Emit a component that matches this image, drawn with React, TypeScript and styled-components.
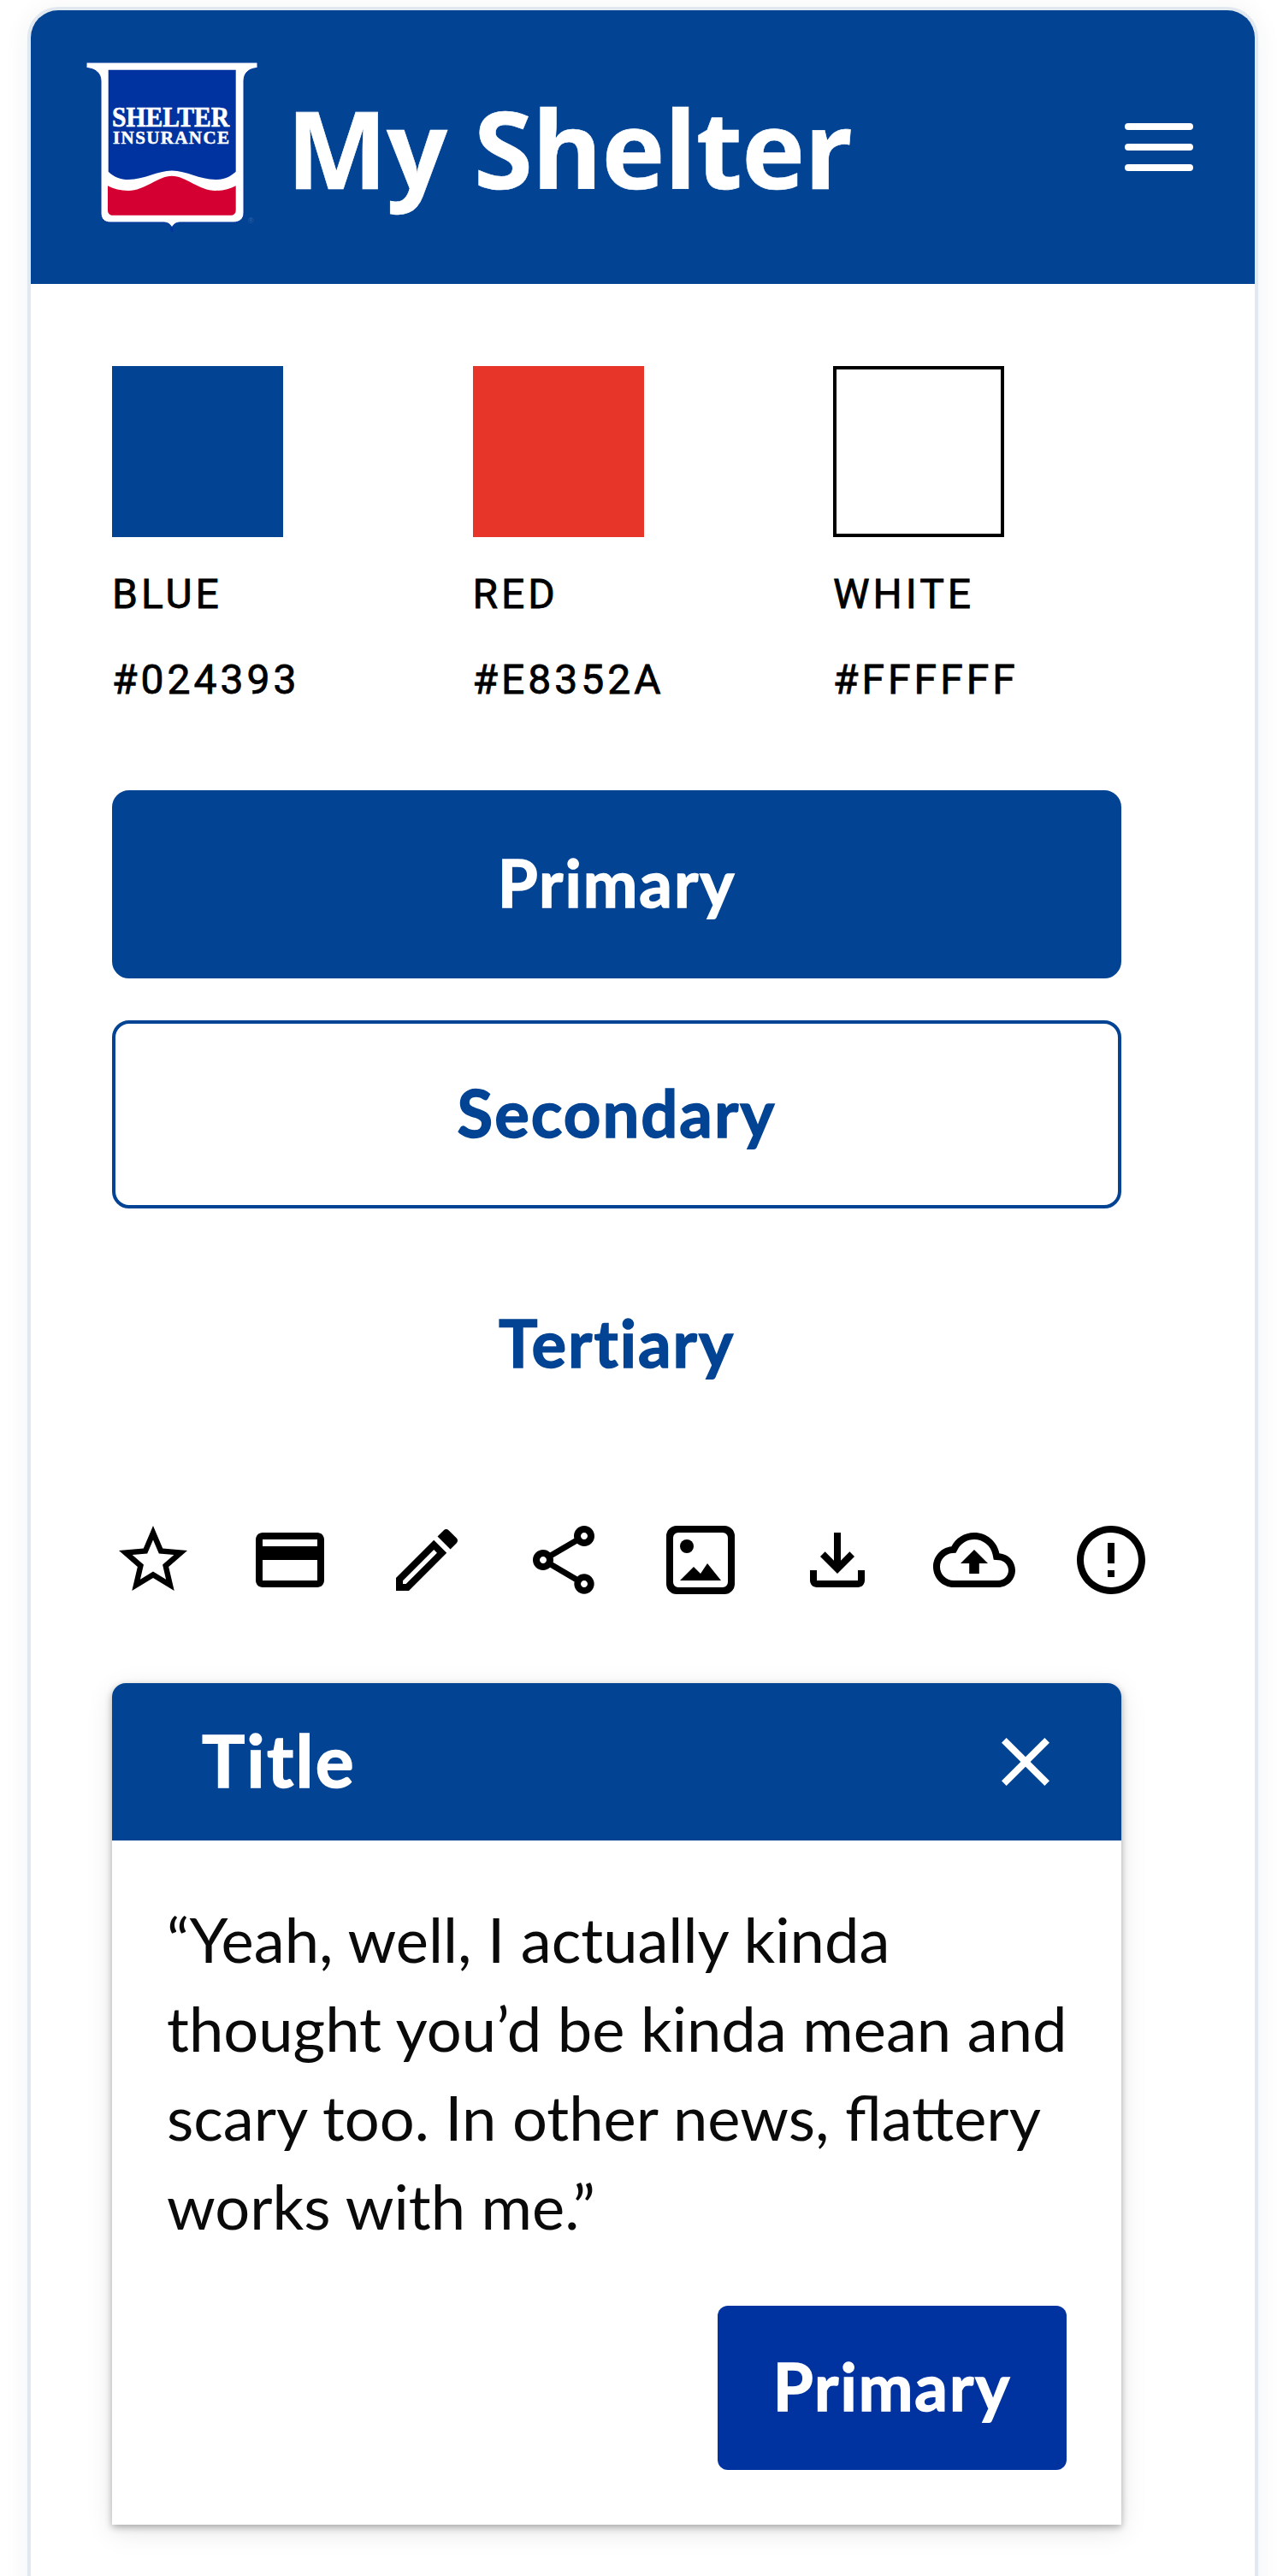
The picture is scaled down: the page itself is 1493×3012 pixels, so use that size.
import React from "react";
import styled, { createGlobalStyle } from "styled-components";

const Global = createGlobalStyle`
  html, body { margin: 0; padding: 0; background: #fff; }
  body { height: 3012px; overflow: hidden; font-family: "Lato", "Liberation Sans", sans-serif; }
`;

const Page = styled.div`
  height: 3012px;
  overflow: hidden;
  padding: 8px 22px 0 32px;
  box-sizing: border-box;
`;
const Frame = styled.div`
  width: 1439px;
  height: 3100px;
  box-sizing: border-box;
  background: #fff;
  border: 4px solid #e2e8f0;
  border-radius: 36px;
  box-shadow: 0 4px 32px rgba(30, 50, 90, 0.06);
  overflow: hidden;
`;
const Header = styled.header`
  height: 320px;
  background: #024393;
  display: flex;
  align-items: center;
  padding: 0 72px 0 65px;
`;
const Logo = styled.svg`
  width: 200px;
  height: 198px;
  flex: none;
`;
const Brand = styled.h1`
  margin: 0 0 0 34px;
  flex: 1;
  font: 700 125px/1 "Open Sans", "Liberation Sans", sans-serif;
  letter-spacing: -0.8px;
  color: #fff;
  -webkit-text-stroke: 0.6px #fff;
`;
const Burger = styled.div`
  display: flex;
  flex-direction: column;
  gap: 16px;
`;
const BurgerBar = styled.span`
  display: block;
  width: 80px;
  height: 8px;
  border-radius: 4px;
  background: #fff;
`;
const Content = styled.main`
  padding: 96px 0 0 95px;
`;
const Swatches = styled.section`
  display: grid;
  grid-template-columns: repeat(3, 421.5px);
`;
const Swatch = styled.div``;
const Chip = styled.div<{ $color: string; $outlined?: boolean }>`
  width: 200px;
  height: 200px;
  box-sizing: border-box;
  background: ${(p) => p.$color};
  border: ${(p) => (p.$outlined ? "4px solid #000" : "none")};
  margin-bottom: 17px;
`;
const SwatchText = styled.div`
  font: 400 48px/100px Roboto, "Liberation Sans", sans-serif;
  letter-spacing: 4px;
  color: #000;
  -webkit-text-stroke: 0.8px #000;
`;
const Buttons = styled.section`
  margin-top: 79px;
  width: 1180px;
  display: flex;
  flex-direction: column;
  gap: 49px;
`;
const Button = styled.button<{ $kind: "primary" | "secondary" | "tertiary" }>`
  height: 220px;
  box-sizing: border-box;
  padding: 0 0 4px;
  border-radius: 20px;
  font: 700 76px/1 Lato, "Liberation Sans", sans-serif;
  font-variant-ligatures: none;
  letter-spacing: 2px;
  -webkit-text-stroke: 1.5px currentColor;
  background: ${(p) => (p.$kind === "primary" ? "#024393" : "#fff")};
  color: ${(p) => (p.$kind === "primary" ? "#fff" : "#024393")};
  border: ${(p) =>
    p.$kind === "tertiary" ? "none" : "4px solid #024393"};
`;
const IconRow = styled.section`
  margin-top: 94px;
  display: flex;
  gap: 64px;
`;
const Icon = styled.svg<{ $color?: string }>`
  width: 96px;
  height: 96px;
  flex: none;
  fill: ${(p) => p.$color ?? "#000"};
`;
const Modal = styled.section`
  margin-top: 96px;
  width: 1180px;
  height: 984px;
  background: #fff;
  border-radius: 16px 16px 0 0;
  box-shadow: 0 3px 8px rgba(0, 0, 0, 0.3), 0 8px 32px rgba(0, 0, 0, 0.1);
`;
const ModalHeader = styled.header`
  height: 184px;
  background: #024393;
  border-radius: 16px 16px 0 0;
  display: flex;
  align-items: center;
  justify-content: space-between;
  padding: 0 64px 0 105px;
`;
const ModalTitle = styled.h2`
  margin: 0 0 4px;
  font: 700 84px/1 Lato, "Liberation Sans", sans-serif;
  font-variant-ligatures: none;
  letter-spacing: 2.3px;
  -webkit-text-stroke: 1.5px #fff;
  color: #fff;
`;
const ModalBody = styled.div`
  padding: 63px 64px 64px 64px;
`;
const Quote = styled.p`
  margin: 0 -16px 0 0;
  font: 400 72.3px/104px Lato, "Liberation Sans", sans-serif;
  color: #0a0a0a;
`;
const ModalActions = styled.div`
  margin-top: 65px;
  display: flex;
  justify-content: flex-end;
`;
const ModalButton = styled.button`
  width: 408px;
  height: 192px;
  border: none;
  padding: 0 0 4px;
  border-radius: 12px;
  background: #0033a0;
  color: #fff;
  font: 700 76px/1 Lato, "Liberation Sans", sans-serif;
  letter-spacing: 2px;
  -webkit-text-stroke: 1.5px #fff;
`;

const paths: Record<string, React.ReactNode> = {
  star: <path d="M22 9.24l-7.19-.62L12 2 9.19 8.63 2 9.24l5.46 4.73L5.82 21 12 17.27 18.18 21l-1.63-7.03L22 9.24zM12 15.4l-3.76 2.27 1-4.28-3.32-2.88 4.38-.38L12 6.1l1.71 4.04 4.38.38-3.32 2.88 1 4.28L12 15.4z" />,
  card: <path d="M20 4H4c-1.11 0-1.99.89-1.99 2L2 18c0 1.11.89 2 2 2h16c1.11 0 2-.89 2-2V6c0-1.11-.89-2-2-2zm0 14H4v-6h16v6zm0-10H4V6h16v2z" />,
  edit: <path d="M14.06 9.02l.92.92L5.92 19H5v-.92l9.06-9.06M17.66 3c-.25 0-.51.1-.7.29l-1.83 1.83 3.75 3.75 1.83-1.83c.39-.39.39-1.02 0-1.41l-2.34-2.34c-.2-.2-.45-.29-.71-.29zm-3.6 3.19L3 17.25V21h3.75L17.81 9.94l-3.75-3.75z" />,
  share: <path d="M18 16.08c-.76 0-1.44.3-1.96.77L8.91 12.7c.05-.23.09-.46.09-.7s-.04-.47-.09-.7l7.05-4.11c.54.5 1.25.81 2.04.81 1.66 0 3-1.34 3-3s-1.34-3-3-3-3 1.34-3 3c0 .24.04.47.09.7L8.04 9.81C7.5 9.31 6.79 9 6 9c-1.66 0-3 1.34-3 3s1.34 3 3 3c.79 0 1.5-.31 2.04-.81l7.12 4.16c-.05.21-.08.43-.08.65 0 1.61 1.31 2.92 2.92 2.92s2.92-1.31 2.92-2.92c0-1.61-1.31-2.92-2.92-2.92zM18 4c.55 0 1 .45 1 1s-.45 1-1 1-1-.45-1-1 .45-1 1-1zM6 13c-.55 0-1-.45-1-1s.45-1 1-1 1 .45 1 1-.45 1-1 1zm12 7.02c-.55 0-1-.45-1-1s.45-1 1-1 1 .45 1 1-.45 1-1 1z" />,
  image: (
    <>
      <path fillRule="evenodd" d="M5 2h14a3 3 0 0 1 3 3v14a3 3 0 0 1-3 3H5a3 3 0 0 1-3-3V5a3 3 0 0 1 3-3zm.5 2A1.5 1.5 0 0 0 4 5.5v13A1.5 1.5 0 0 0 5.500 20h13a1.500 1.500 0 0 0 1.500-1.500v-13A1.500 1.500 0 0 0 18.500 4z" />
      <circle cx="8" cy="8" r="2" />
      <path d="M6 18l4-4 2 2 2-3 4 5z" />
    </>
  ),
  download: <path d="M18 15v3H6v-3H4v3c0 1.1.9 2 2 2h12c1.1 0 2-.9 2-2v-3h-2zm-1-4l-1.41-1.41L13 12.17V4h-2v8.17L8.41 9.59 7 11l5 5 5-5z" />,
  cloud: <path d="M19.35 10.04C18.67 6.59 15.64 4 12 4 9.11 4 6.6 5.64 5.35 8.04 2.34 8.36 0 10.91 0 14c0 3.31 2.69 6 6 6h13c2.76 0 5-2.24 5-5 0-2.64-2.05-4.78-4.65-4.96zM19 18H6c-2.21 0-4-1.79-4-4 0-2.05 1.53-3.76 3.56-3.97l1.07-.11.5-.95C8.08 7.14 9.94 6 12 6c2.62 0 4.88 1.86 5.39 4.43l.3 1.5 1.53.11c1.56.1 2.78 1.41 2.78 2.96 0 1.65-1.35 3-3 3zM8 13h2.55v3h2.9v-3H16l-4-4z" />,
  alert: <path d="M11 15h2v2h-2zm0-8h2v6h-2zm.99-5C6.47 2 2 6.48 2 12s4.47 10 9.99 10C17.52 22 22 17.52 22 12S17.52 2 11.99 2zM12 20c-4.42 0-8-3.58-8-8s3.58-8 8-8 8 3.58 8 8-3.58 8-8 8z" />,
  close: <path d="M19 6.41L17.59 5 12 10.59 6.41 5 5 6.41 10.59 12 5 17.59 6.41 19 12 13.41 17.59 19 19 17.59 13.41 12z" />,
};

const ShelterLogo = () => (
  <Logo viewBox="0 0 200 198" aria-label="Shelter Insurance">
    <path
      d="M0 0H200V6.500C190 7 184 12 184 22V176C184 183 179 187 172 187H110C105 187 102 189 100 193C98 189 95 187 90 187H28C21 187 17 183 17 176V22C17 12 10 7 0 6.500Z"
      fill="#fff"
      stroke="#0033a0"
      strokeWidth="1"
    />
    <path d="M98.500 193H101.500V198H98.500Z" fill="#0033a0" />
    <path
      d="M25.700 8.700H174.700V127.700C168 134 160 137 151 137C132 137 117 126.500 100 126.500C83 126.500 68 137 49 137C40 137 32 134 25.700 127.700Z"
      fill="#0033a0"
    />
    <path
      d="M25 144.300C32 148 40 150 49 150C68 150 84 132.700 100 132.700C116 132.700 132 150 151 150C160 150 168 148 174.700 144.300V172.700C174.700 176.700 172 178.700 168.700 178.700H31C27.700 178.700 25 176.700 25 172.700Z"
      fill="#d50032"
    />
    <text x="30" y="74.700" fill="#fff" stroke="#fff" strokeWidth="0.7" fontFamily="'Liberation Serif', serif" fontWeight="700" fontSize="33" textLength="137" lengthAdjust="spacingAndGlyphs">SHELTER</text>
    <text x="31" y="95" fill="#fff" stroke="#fff" strokeWidth="0.5" fontFamily="'Liberation Serif', serif" fontWeight="700" fontSize="21" textLength="136" lengthAdjust="spacing">INSURANCE</text>
    <text x="189" y="188" fill="#2f62ad" fontFamily="'Liberation Sans', sans-serif" fontSize="9">®</text>
  </Logo>
);

const swatches = [
  { name: "BLUE", hex: "#024393", color: "#024393" },
  { name: "RED", hex: "#E8352A", color: "#E8352A" },
  { name: "WHITE", hex: "#FFFFFF", color: "#FFFFFF", outlined: true },
];
const icons = ["star", "card", "edit", "share", "image", "download", "cloud", "alert"];

export default function App() {
  return (
    <Page>
      <Global />
      <Frame>
        <Header>
          <ShelterLogo />
          <Brand>My Shelter</Brand>
          <Burger>
            <BurgerBar />
            <BurgerBar />
            <BurgerBar />
          </Burger>
        </Header>
        <Content>
          <Swatches>
            {swatches.map((s) => (
              <Swatch key={s.name}>
                <Chip $color={s.color} $outlined={s.outlined} />
                <SwatchText>{s.name}</SwatchText>
                <SwatchText>{s.hex}</SwatchText>
              </Swatch>
            ))}
          </Swatches>
          <Buttons>
            <Button $kind="primary">Primary</Button>
            <Button $kind="secondary">Secondary</Button>
            <Button $kind="tertiary">Tertiary</Button>
          </Buttons>
          <IconRow>
            {icons.map((name) => (
              <Icon key={name} viewBox="0 0 24 24">{paths[name]}</Icon>
            ))}
          </IconRow>
          <Modal>
            <ModalHeader>
              <ModalTitle>Title</ModalTitle>
              <Icon viewBox="0 0 24 24" $color="#fff">{paths.close}</Icon>
            </ModalHeader>
            <ModalBody>
              <Quote>“Yeah, well, I actually kinda thought you’d be kinda mean and scary too. In other news, flattery works with me.”</Quote>
              <ModalActions>
                <ModalButton>Primary</ModalButton>
              </ModalActions>
            </ModalBody>
          </Modal>
        </Content>
      </Frame>
    </Page>
  );
}
